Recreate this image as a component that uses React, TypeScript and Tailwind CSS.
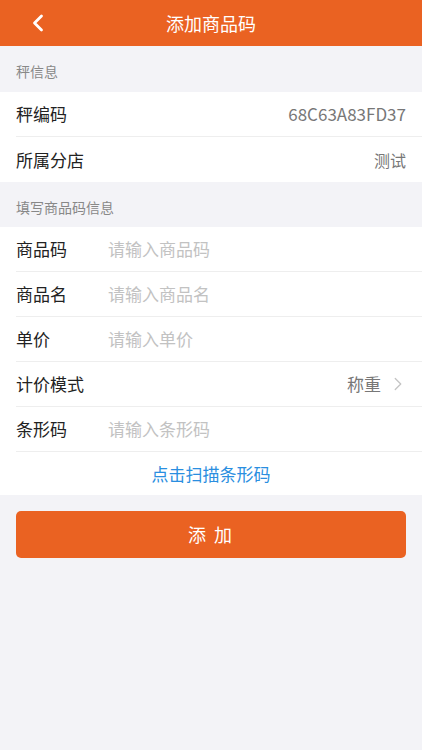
import { ChevronLeft, ChevronRight } from 'lucide-react';

const font = { fontFamily: '"Noto Sans CJK SC", "Open Sans", sans-serif' };

const Row = ({ label, children, last }: { label: string; children: React.ReactNode; last?: boolean }) => (
  <div className="pl-4 bg-white">
    <div className={`flex items-center h-[45px] pr-4 ${last ? '' : 'border-b border-[#eeeeee]'}`}>
      <span className="w-[92px] shrink-0 text-[17px] text-[#222]">{label}</span>
      {children}
    </div>
  </div>
);

const SectionTitle = ({ title, tall }: { title: string; tall?: boolean }) => (
  <div className={`${tall ? 'h-[46px]' : 'h-[45px]'} flex items-center px-4 pt-[5px] text-[14px] text-[#888]`}>{title}</div>
);

export default function App() {
  return (
    <div className="w-[422px] h-[750px] bg-[#f3f3f7]" style={font}>
      {/* Header */}
      <div className="h-[46px] bg-[#ea6222] flex items-center relative">
        <ChevronLeft className="absolute left-[24px] text-white" size={28} strokeWidth={2.4} />
        <div className="flex-1 text-center text-white text-[18px]">添加商品码</div>
      </div>

      <SectionTitle title="秤信息" tall />
      <Row label="秤编码">
        <span className="ml-auto text-[17px] text-[#777]">68C63A83FD37</span>
      </Row>
      <Row label="所属分店" last>
        <span className="ml-auto text-[16px] text-[#777]">测试</span>
      </Row>

      <SectionTitle title="填写商品码信息" />
      <Row label="商品码">
        <span className="text-[17px] text-[#c2c2c2]">请输入商品码</span>
      </Row>
      <Row label="商品名">
        <span className="text-[17px] text-[#c2c2c2]">请输入商品名</span>
      </Row>
      <Row label="单价">
        <span className="text-[17px] text-[#c2c2c2]">请输入单价</span>
      </Row>
      <Row label="计价模式">
        <span className="ml-auto text-[17px] text-[#777]">称重</span>
        <ChevronRight className="ml-[6px] -mr-[3px] text-[#c4c4c4]" size={22} strokeWidth={1.4} />
      </Row>
      <Row label="条形码">
        <span className="text-[17px] text-[#c2c2c2]">请输入条形码</span>
      </Row>
      <div className="h-[43px] bg-white flex items-center justify-center text-[17px] text-[#2a8ee0]">
        点击扫描条形码
      </div>

      <div className="px-4 pt-[16px]">
        <button className="w-full h-[47px] rounded-[5px] bg-[#ea6222] text-white text-[18px] tracking-[2px]">
          添 加
        </button>
      </div>
    </div>
  );
}
